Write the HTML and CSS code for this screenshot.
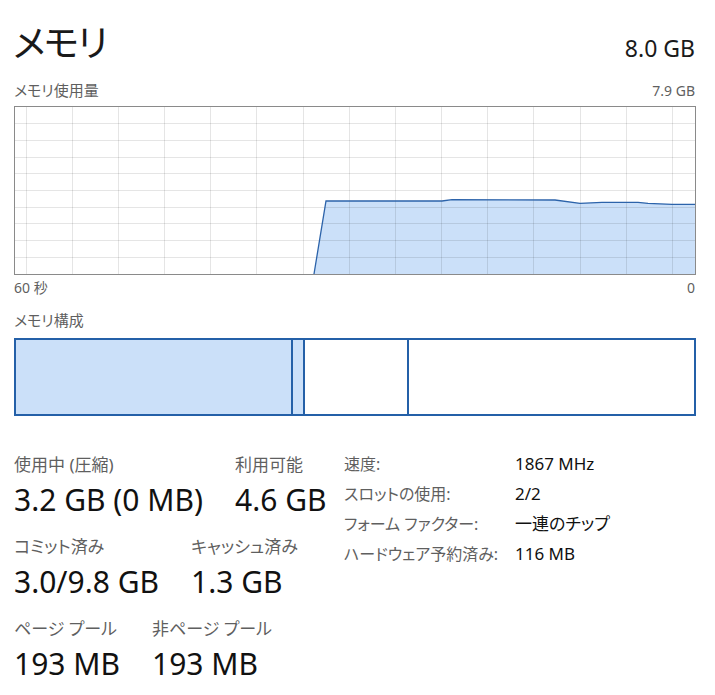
FILE: index.html
```html
<!DOCTYPE html>
<html lang="ja">
<head>
<meta charset="utf-8">
<title>メモリ</title>
<link rel="stylesheet" href="styles.css">
</head>
<body>
<div class="page">
  <div class="header">
    <div class="title">メモリ</div>
    <div class="total">8.0 GB</div>
  </div>
  <div class="sub">
    <span class="label">メモリ使用量</span>
    <span class="max">7.9 GB</span>
  </div>
  <div class="graph">
    <svg width="680" height="167" viewBox="0 0 680 167">
      <polygon class="fill" points="299,167 311,94 427,94 437,92.7 540,93 565,96.3 587,95.3 623,95.3 633,96.3 657,97.3 680,97.3 680,167"/>
      <g class="grid">
        <line x1="0" y1="16.5" x2="680" y2="16.5"/>
        <line x1="0" y1="33.5" x2="680" y2="33.5"/>
        <line x1="0" y1="50.5" x2="680" y2="50.5"/>
        <line x1="0" y1="66.5" x2="680" y2="66.5"/>
        <line x1="0" y1="83.5" x2="680" y2="83.5"/>
        <line x1="0" y1="100.5" x2="680" y2="100.5"/>
        <line x1="0" y1="116.5" x2="680" y2="116.5"/>
        <line x1="0" y1="133.5" x2="680" y2="133.5"/>
        <line x1="0" y1="150.5" x2="680" y2="150.5"/>
        <line x1="11.5" y1="0" x2="11.5" y2="167"/>
        <line x1="57.5" y1="0" x2="57.5" y2="167"/>
        <line x1="103.5" y1="0" x2="103.5" y2="167"/>
        <line x1="149.5" y1="0" x2="149.5" y2="167"/>
        <line x1="195.5" y1="0" x2="195.5" y2="167"/>
        <line x1="241.5" y1="0" x2="241.5" y2="167"/>
        <line x1="288.5" y1="0" x2="288.5" y2="167"/>
        <line x1="334.5" y1="0" x2="334.5" y2="167"/>
        <line x1="380.5" y1="0" x2="380.5" y2="167"/>
        <line x1="426.5" y1="0" x2="426.5" y2="167"/>
        <line x1="472.5" y1="0" x2="472.5" y2="167"/>
        <line x1="518.5" y1="0" x2="518.5" y2="167"/>
        <line x1="565.5" y1="0" x2="565.5" y2="167"/>
        <line x1="611.5" y1="0" x2="611.5" y2="167"/>
        <line x1="657.5" y1="0" x2="657.5" y2="167"/>
      </g>
      <polyline class="stroke" points="299,167 311,94 427,94 437,92.7 540,93 565,96.3 587,95.3 623,95.3 633,96.3 657,97.3 680,97.3"/>
    </svg>
  </div>
  <div class="axis">
    <span>60 秒</span>
    <span>0</span>
  </div>
  <div class="label section">メモリ構成</div>
  <div class="bar">
    <div class="seg seg-used"></div>
    <div class="seg seg-mod"></div>
    <div class="seg seg-standby"></div>
    <div class="seg seg-free"></div>
  </div>
  <div class="stats">
    <div class="left">
      <div class="row">
        <div class="stat"><div class="slabel">使用中 (圧縮)</div><div class="value">3.2 GB (0 MB)</div></div>
        <div class="stat"><div class="slabel">利用可能</div><div class="value">4.6 GB</div></div>
      </div>
      <div class="row">
        <div class="stat"><div class="slabel">コミット済み</div><div class="value">3.0/9.8 GB</div></div>
        <div class="stat"><div class="slabel">キャッシュ済み</div><div class="value">1.3 GB</div></div>
      </div>
      <div class="row">
        <div class="stat"><div class="slabel">ページ プール</div><div class="value">193 MB</div></div>
        <div class="stat"><div class="slabel">非ページ プール</div><div class="value">193 MB</div></div>
      </div>
    </div>
    <div class="right">
      <div class="k">速度:</div><div class="v">1867 MHz</div>
      <div class="k">スロットの使用:</div><div class="v">2/2</div>
      <div class="k">フォーム ファクター:</div><div class="v">一連のチップ</div>
      <div class="k">ハードウェア予約済み:</div><div class="v">116 MB</div>
    </div>
  </div>
</div>
</body>
</html>
```

FILE: styles.css
```css
* { box-sizing: border-box; }
html, body { margin: 0; padding: 0; background: #ffffff; }
body {
  font-family: "Noto Sans", "Noto Sans CJK JP", sans-serif;
  font-feature-settings: "palt";
  color: #1a1a1a;
}
.page {
  width: 715px;
  padding: 14px 20px 0 14px;
}
.header {
  display: flex;
  justify-content: space-between;
  align-items: baseline;
  height: 56px;
}
.title {
  font-size: 37px;
  line-height: 58px;
  letter-spacing: -1.5px;
  margin-left: -1px;
}
.total {
  font-size: 23px;
  line-height: 56px;
}
.sub {
  display: flex;
  justify-content: space-between;
  align-items: baseline;
  height: 36px;
  padding-top: 10px;
}
.label {
  font-size: 15px;
  color: #5f5f5f;
  line-height: 20px;
}
.max {
  font-size: 14px;
  color: #5f5f5f;
  line-height: 20px;
}
.graph {
  width: 682px;
  height: 169px;
  border: 1px solid #8a8a8a;
}
.graph svg { display: block; }
.fill { fill: #cbe0f9; }
.grid line { stroke: rgba(0, 0, 0, 0.1); stroke-width: 1; }
.stroke { fill: none; stroke: #2c63aa; stroke-width: 1.3; }
.axis {
  display: flex;
  justify-content: space-between;
  font-size: 14px;
  color: #5f5f5f;
  line-height: 20px;
  height: 30px;
  padding-top: 3px;
}
.section {
  height: 33px;
  padding-top: 5px;
}
.bar {
  width: 682px;
  height: 78px;
  border: 2px solid #2460a8;
  display: flex;
}
.seg { height: 100%; }
.seg-used { width: 275px; background: #cbe0f9; }
.seg-mod { width: 12px; border-left: 2px solid #2460a8; background: #cbe0f9; }
.seg-standby { width: 104px; border-left: 2px solid #2460a8; }
.seg-free { flex: 1; border-left: 2px solid #2460a8; }
.stats {
  display: flex;
  margin-top: 38px;
}
.left {
  width: 330px;
  display: flex;
  flex-direction: column;
}
.row {
  display: flex;
  gap: 32px;
  height: 82px;
}
.slabel {
  font-size: 17px;
  color: #5f5f5f;
  line-height: 22px;
}
.value {
  font-size: 30px;
  line-height: 48px;
  color: #111;
}
.right {
  display: grid;
  grid-template-columns: 171px auto;
  grid-auto-rows: 30px;
  align-content: start;
  font-size: 16px;
  line-height: 20px;
}
.k { color: #5f5f5f; }
.v { color: #111; font-size: 17px; }
```
